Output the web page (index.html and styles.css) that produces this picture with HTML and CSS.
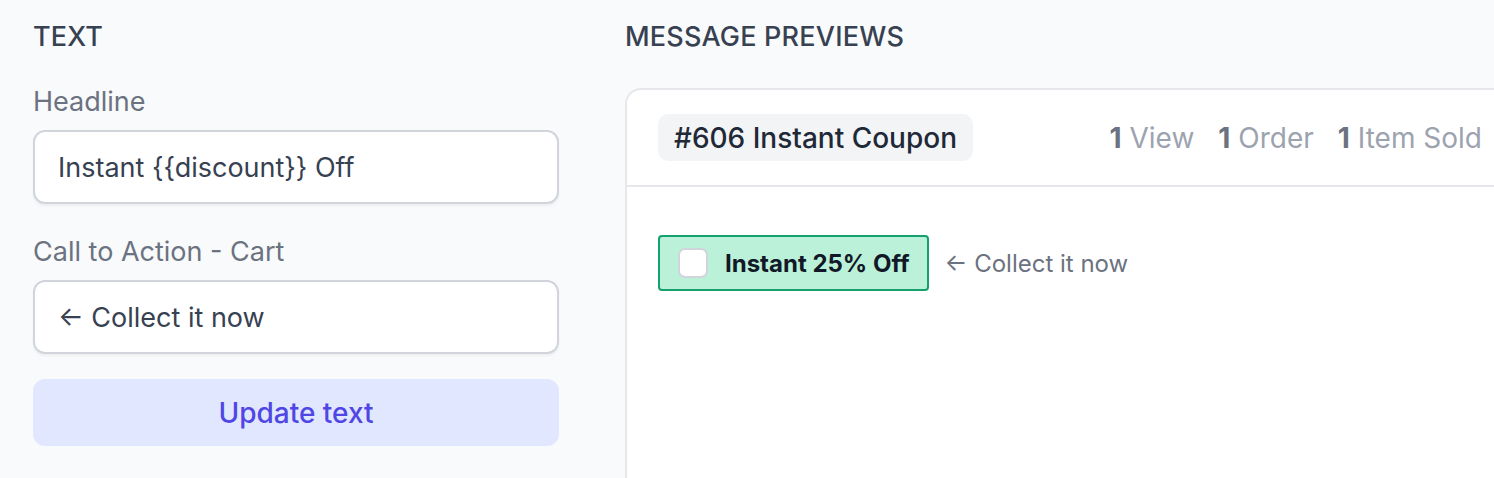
FILE: index.html
```html
<!DOCTYPE html>
<html lang="en">
<head>
<meta charset="utf-8">
<title>Message previews</title>
<link rel="stylesheet" href="styles.css">
</head>
<body>
<div class="page">
  <section class="editor">
    <h2 class="section-title">TEXT</h2>
    <div class="field">
      <label class="label">Headline</label>
      <div class="input">Instant {{discount}} Off</div>
    </div>
    <div class="field">
      <label class="label">Call to Action - Cart</label>
      <div class="input">← Collect it now</div>
    </div>
    <button class="btn">Update text</button>
  </section>
  <section class="previews">
    <h2 class="section-title">MESSAGE PREVIEWS</h2>
    <div class="card">
      <div class="card-head">
        <span class="badge">#606 Instant Coupon</span>
        <div class="stats">
          <span class="stat"><b>1</b> View</span>
          <span class="stat"><b>1</b> Order</span>
          <span class="stat"><b>1</b> Item Sold</span>
        </div>
      </div>
      <div class="card-body">
        <div class="coupon">
          <span class="check"></span>
          <span class="coupon-text">Instant 25% Off</span>
        </div>
        <span class="cta">← Collect it now</span>
      </div>
    </div>
  </section>
</div>
</body>
</html>
```
FILE: styles.css
```css
html, body {
  margin: 0;
  padding: 0;
  overflow: hidden;
  background: #f9fafb;
}
body {
  font-family: Inter, "Noto Sans", sans-serif;
  color: #374151;
  width: 1494px;
  height: 478px;
}
.page {
  display: flex;
  gap: 66px;
  padding: 18px 0 0 33px;
}
.editor {
  width: 526px;
  flex: none;
  display: flex;
  flex-direction: column;
}
.section-title {
  margin: 0;
  font-size: 27px;
  line-height: 38px;
  font-weight: 500;
  color: #374151;
  letter-spacing: 0.2px;
}
.field {
  display: flex;
  flex-direction: column;
}
.editor .section-title {
  margin-bottom: 26px;
}
.label {
  font-size: 27px;
  line-height: 40px;
  color: #6b7280;
  margin-bottom: 8px;
}
.input {
  box-sizing: border-box;
  height: 74px;
  border: 2px solid #d1d5db;
  border-radius: 12px;
  background: #fff;
  box-shadow: 0 2px 3px rgba(0,0,0,0.05);
  padding: 0 23px;
  display: flex;
  align-items: center;
  font-size: 27px;
  color: #374151;
  margin-bottom: 28px;
}
.field + .field .input {
  margin-bottom: 25px;
}
.btn {
  height: 67px;
  border: none;
  border-radius: 12px;
  background: #e0e7ff;
  color: #4f46e5;
  font-family: inherit;
  font-size: 28px;
  font-weight: 500;
  padding: 0;
}
.previews {
  flex: none;
  width: 891px;
  display: flex;
  flex-direction: column;
}
.previews .section-title {
  margin-bottom: 32px;
}
.card {
  background: #fff;
  border: 2px solid #e5e7eb;
  border-radius: 16px;
  height: 440px;
}
.card-head {
  display: flex;
  align-items: center;
  justify-content: space-between;
  height: 95px;
  padding: 0 32px 0 31px;
  border-bottom: 2px solid #e5e7eb;
}
.badge {
  background: #f3f4f6;
  border-radius: 10px;
  padding: 0 16px;
  height: 47px;
  display: flex;
  align-items: center;
  font-size: 28px;
  font-weight: 500;
  color: #1f2937;
}
.stats {
  display: flex;
  gap: 24px;
  font-size: 28px;
  color: #9ca3af;
}
.stat b {
  color: #6b7280;
  font-weight: 700;
}
.card-body {
  display: flex;
  align-items: center;
  gap: 16px;
  padding: 48px 31px;
}
.coupon {
  display: flex;
  align-items: center;
  gap: 17px;
  height: 56px;
  box-sizing: border-box;
  padding: 0 17px 0 18px;
  background: #bbf0d9;
  border: 2px solid #15a070;
  border-radius: 4px;
}
.check {
  width: 30px;
  height: 30px;
  box-sizing: border-box;
  background: #fff;
  border: 2px solid #d1d5db;
  border-radius: 7px;
}
.coupon-text {
  font-size: 24px;
  font-weight: 700;
  color: #111827;
}
.cta {
  font-size: 24px;
  color: #6b7280;
}
```
